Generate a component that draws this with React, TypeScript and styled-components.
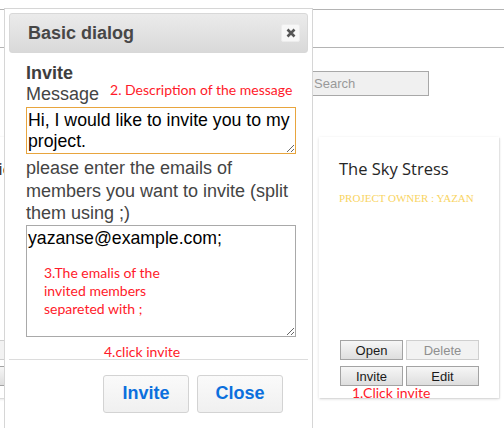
import styled, { createGlobalStyle } from "styled-components";

const GlobalStyle = createGlobalStyle`
  body {
    margin: 0;
    background: #fff;
    font-family: "Liberation Sans", Arial, sans-serif;
  }
`;

const Page = styled.div`
  position: relative;
  width: 504px;
  height: 428px;
  overflow: hidden;
`;

const Header = styled.div`
  margin-top: 9px;
  height: 37px;
  border-top: 1px solid #b4b4b4;
  border-bottom: 1px solid #b4b4b4;
`;

const SearchRow = styled.div`
  margin-top: 23px;
  padding-left: 311px;
  display: flex;
`;

const SearchInput = styled.input`
  box-sizing: border-box;
  width: 118px;
  height: 25px;
  padding: 0 0 0 2px;
  border: 1px solid #a8a8a8;
  background: #f0f0f0;
  font-family: "Liberation Sans", Arial, sans-serif;
  font-size: 13px;
  outline: none;

  &::placeholder {
    color: #999;
  }
`;

const CardRow = styled.div`
  margin: 41px 5px 0 -155px;
  display: flex;
  justify-content: space-between;
`;

const Card = styled.div`
  position: relative;
  box-sizing: border-box;
  width: 180px;
  height: 261px;
  padding: 21px 0 12px 20px;
  background: #fff;
  box-shadow: 0 1px 3px rgba(0, 0, 0, 0.14), 1px 1px 1px rgba(0, 0, 0, 0.06);
  display: flex;
  flex-direction: column;
`;

const CardTitle = styled.div`
  font-family: "Open Sans", "Noto Sans", sans-serif;
  font-size: 16.5px;
  line-height: 22px;
  color: #262626;
  white-space: nowrap;
`;

const Owner = styled.div`
  margin-top: 11px;
  font-family: "Liberation Serif", "Times New Roman", serif;
  font-size: 11px;
  line-height: 14px;
  color: #f9d462;
  white-space: nowrap;
`;

const CardButtons = styled.div`
  margin-top: auto;
  margin-left: 1px;
  display: grid;
  grid-template-columns: 63px 73px;
  gap: 6px 3px;
`;

const SmallButton = styled.button<{ $disabled?: boolean }>`
  box-sizing: border-box;
  height: 20px;
  padding: 0;
  border: 1px solid ${p => (p.$disabled ? "#cfcfcf" : "#a3a3a3")};
  border-radius: 0;
  background: ${p =>
    p.$disabled ? "#f2f2f2" : "linear-gradient(#f6f6f6, #dedede)"};
  color: ${p => (p.$disabled ? "#8f8f8f" : "#1a1a1a")};
  font-family: "Liberation Sans", Arial, sans-serif;
  font-size: 13px;
`;

const Note = styled.span`
  font-family: Lato, "Open Sans", sans-serif;
  font-size: 14px;
  line-height: 16px;
  color: #ff1a2a;
  white-space: nowrap;
`;

const CardNote = styled(Note)`
  position: absolute;
  left: 33px;
  top: 248px;
`;

const Dialog = styled.div`
  position: absolute;
  left: 4px;
  top: 8px;
  box-sizing: border-box;
  width: 309px;
  height: 440px;
  padding: 4px;
  border: 1px solid #d6d6d6;
  background: #fff;
  display: flex;
  flex-direction: column;
`;

const TitleBar = styled.div`
  box-sizing: border-box;
  height: 40px;
  padding: 0 7px 0 18px;
  border: 1px solid #d8d8d8;
  border-radius: 3px;
  background: linear-gradient(#ebebeb, #d9d9d9);
  display: flex;
  align-items: center;
  justify-content: space-between;
`;

const Title = styled.span`
  font-size: 18px;
  font-weight: bold;
  color: #474747;
`;

const CloseIcon = styled.button`
  box-sizing: border-box;
  width: 19px;
  height: 18px;
  padding: 0;
  border: 1px solid #ececec;
  border-radius: 2px;
  background: #f7f7f7;
  display: flex;
  align-items: center;
  justify-content: center;
`;

const Content = styled.div`
  padding: 11px 16px 0 17px;
  color: #444;
  font-size: 18px;
`;

const Heading = styled.div`
  font-weight: bold;
  line-height: 19px;
  color: #3e3e3e;
`;

const Label = styled.div`
  padding-top: 2px;
  line-height: 19px;
  margin-bottom: 3px;
`;

const InlineNote = styled(Note)`
  position: relative;
  top: -5px;
  margin-left: 11px;
  line-height: 0;
`;

const Area = styled.textarea<{ $focused?: boolean; $rows: number }>`
  display: block;
  box-sizing: border-box;
  width: 270px;
  height: ${p => p.$rows}px;
  margin: 0;
  padding: 2px 0 2px 1px;
  border: 1px solid ${p => (p.$focused ? "#e8a53e" : "#a9a9a9")};
  border-radius: 0;
  font-family: "Liberation Sans", Arial, sans-serif;
  font-size: 17.7px;
  line-height: 20.7px;
  color: #000;
  outline: none;
  resize: both;
  overflow: hidden;
`;

const Hint = styled.div`
  margin-top: 3px;
  line-height: 22.5px;
`;

const AreaWrap = styled.div`
  position: relative;
`;

const AreaNote = styled(Note)`
  position: absolute;
  left: 18px;
  top: 39px;
  line-height: 18px;
  white-space: normal;
  width: 140px;
`;

const StepNote = styled(Note)`
  display: block;
  margin: 8px 0 0 78px;
  line-height: 14px;
`;

const ButtonPane = styled.div`
  padding: 15px 25px 0 0;
  border-top: 1px solid #dcdcdc;
  display: flex;
  justify-content: flex-end;
  gap: 8px;
`;

const DialogButton = styled.button`
  box-sizing: border-box;
  width: 86px;
  height: 38px;
  padding: 0;
  border: 1px solid #d3d3d3;
  border-radius: 3px;
  background: linear-gradient(#fafafa, #f0f0f0);
  color: #0b6fdd;
  font-family: "Liberation Sans", Arial, sans-serif;
  font-size: 18px;
  font-weight: bold;
`;

function ProjectCard({ title, note }: { title: string; note?: string }) {
  return (
    <Card>
      <CardTitle>{title}</CardTitle>
      <Owner>PROJECT OWNER : YAZAN</Owner>
      <CardButtons>
        <SmallButton>Open</SmallButton>
        <SmallButton $disabled>Delete</SmallButton>
        <SmallButton>Invite</SmallButton>
        <SmallButton>Edit</SmallButton>
      </CardButtons>
      {note && <CardNote>{note}</CardNote>}
    </Card>
  );
}

export default function App() {
  return (
    <Page>
      <GlobalStyle />
      <Header />
      <SearchRow>
        <SearchInput placeholder="Search" />
      </SearchRow>
      <CardRow>
        <ProjectCard title="Mobile Music Logic" />
        <ProjectCard title="The Sky Stress" note="1.Click invite" />
      </CardRow>

      <Dialog>
        <TitleBar>
          <Title>Basic dialog</Title>
          <CloseIcon aria-label="close">
            <svg width="10" height="10" viewBox="0 0 10 10">
              <path d="M1.5 1.5 L8.5 8.5 M8.5 1.5 L1.5 8.5" stroke="#555" strokeWidth="2.6" />
            </svg>
          </CloseIcon>
        </TitleBar>
        <Content>
          <Heading>Invite</Heading>
          <Label>
            Message<InlineNote>2. Description of the message</InlineNote>
          </Label>
          <Area $focused $rows={47} defaultValue="Hi, I would like to invite you to my project." />
          <Hint>please enter the emails of members you want to invite (split them using ;)</Hint>
          <AreaWrap>
            <Area $rows={112} defaultValue="yazanse@example.com;" />
            <AreaNote>3.The emalis of the invited members separeted with ;</AreaNote>
          </AreaWrap>
          <StepNote>4.click invite</StepNote>
        </Content>
        <ButtonPane>
          <DialogButton>Invite</DialogButton>
          <DialogButton>Close</DialogButton>
        </ButtonPane>
      </Dialog>
    </Page>
  );
}
